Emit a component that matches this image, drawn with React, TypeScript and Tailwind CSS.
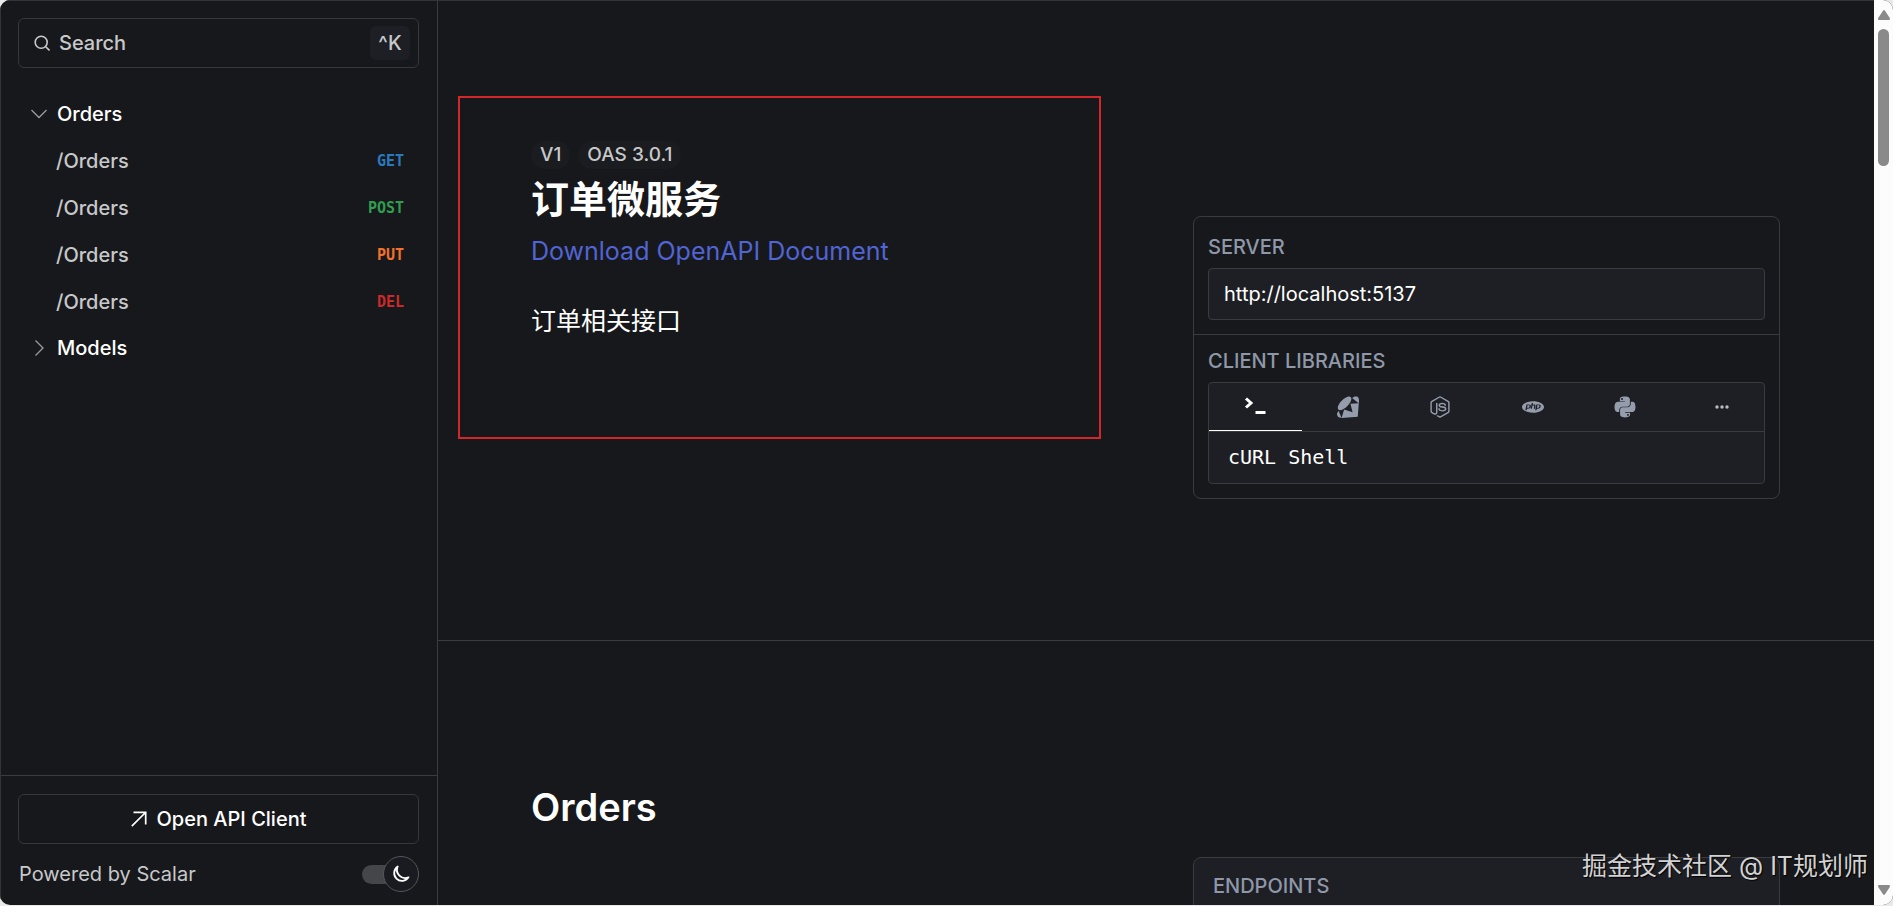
import React from 'react';
import { FaNodeJs, FaPython } from 'react-icons/fa';
import { SiPhp, SiRuby } from 'react-icons/si';

interface Operation {
    id: string;
    path: string;
    method: string;
    color: string;
}

const operations: Operation[] = [
    { id: 'get', path: '/Orders', method: 'GET', color: 'text-[#2b7abf]' },
    { id: 'post', path: '/Orders', method: 'POST', color: 'text-[#2f9e4f]' },
    { id: 'put', path: '/Orders', method: 'PUT', color: 'text-[#f0722b]' },
    { id: 'delete', path: '/Orders', method: 'DEL', color: 'text-[#c92a2a]' },
];

const TerminalIcon = () => (
    <svg viewBox="0 0 22 22" className="h-[22px] w-[22px]" fill="none" stroke="currentColor" strokeWidth="3">
        <path d="M2 2.500l5 4.500-5 4.500" />
        <path d="M11.500 16.500h10" />
    </svg>
);

const DotsIcon = () => (
    <svg viewBox="0 0 14 4" className="h-1 w-[14px]" fill="currentColor">
        <circle cx="2" cy="2" r="1.700" />
        <circle cx="7" cy="2" r="1.700" />
        <circle cx="12" cy="2" r="1.700" />
    </svg>
);

const Chevron = ({ open }: { open?: boolean }) => (
    <svg viewBox="0 0 16 16" className="h-4 w-4 text-[#9a9b9f]" fill="none" stroke="currentColor" strokeWidth="1.300">
        {open ? <path d="M.5 4L8 11.500 15.500 4" /> : <path d="M4.500.5L12 8l-7.500 7.500" />}
    </svg>
);

const clients = [
    { name: 'Shell', icon: <TerminalIcon /> },
    { name: 'Ruby', icon: <SiRuby className="h-[22px] w-[22px]" /> },
    { name: 'Node.js', icon: <FaNodeJs className="h-[22px] w-[22px]" /> },
    { name: 'PHP', icon: <SiPhp className="h-[22px] w-[22px]" /> },
    { name: 'Python', icon: <FaPython className="h-6 w-6" /> },
];

const Sidebar: React.FC = () => (
    <aside className="flex w-[437px] shrink-0 flex-col border-r border-[#3a3b3e] text-xl font-medium">
        <div className="pb-4 pl-[17px] pr-[18px] pt-[17px]">
            <button className="flex h-[50px] w-full items-center rounded-md border border-[#36373a] pl-[15px] pr-2 text-[#c7c8ca]">
                <svg viewBox="0 0 16 16" className="h-4 w-4" fill="none" stroke="currentColor" strokeWidth="1.600">
                    <circle cx="7.200" cy="7.200" r="6" />
                    <path d="M11.500 11.500L15.500 15.500" />
                </svg>
                <span className="ml-[9px]">Search</span>
                <kbd className="ml-auto flex h-[34px] w-10 items-center justify-center rounded-md bg-[#1e1f24] font-[Inter,sans-serif]">^K</kbd>
            </button>
        </div>

        <nav className="flex-1 px-[30px] pt-1.5">
            <button className="flex h-[47px] w-full items-center gap-[10px] text-white">
                <Chevron open />
                Orders
            </button>
            {operations.map((op) => (
                <a key={op.id} href={'#' + op.id} className="flex h-[47px] items-center justify-between pl-[25px] pr-[3px] text-[#c7c8ca]">
                    {op.path}
                    <span className={'font-["DejaVu_Sans_Mono",monospace] text-[15px] font-bold leading-5 ' + op.color}>{op.method}</span>
                </a>
            ))}
            <button className="flex h-[45px] w-full items-center gap-[10px] text-white">
                <Chevron />
                Models
            </button>
        </nav>

        <div className="border-t border-[#3a3b3e] pb-[17px] pl-[17px] pr-[18px] pt-[18px]">
            <button className="flex h-[50px] w-full items-center justify-center gap-[10px] rounded-md border border-[#36373a] text-white">
                <svg viewBox="0 0 16 16" className="h-4 w-4" fill="none" stroke="currentColor" strokeWidth="1.700">
                    <path d="M2.500 1.300h12.200v12.200M14.500 1.500L.8 15.200" />
                </svg>
                Open API Client
            </button>
            <div className="mt-4 flex h-7 items-center justify-between font-normal text-[#c7c8ca]">
                <a href="#scalar" className="pl-px">Powered by Scalar</a>
                <button aria-label="Toggle dark mode" className="flex h-[19px] w-[57px] items-center justify-end rounded-full bg-[#454649]">
                    <span className="flex h-9 w-9 shrink-0 items-center justify-center rounded-full border border-[#55565a] bg-[#191b21] text-white">
                        <svg viewBox="0 0 18 18" className="h-[18px] w-[18px]" fill="none" stroke="currentColor" strokeWidth="1.800" strokeLinejoin="round">
                            <path d="M5.700 1.500A7.800 7.800 0 1 0 16.500 12.300A8.200 8.200 0 0 1 5.700 1.500z" />
                        </svg>
                    </span>
                </button>
            </div>
        </div>
    </aside>
);

const Introduction: React.FC = () => (
    <section className="relative flex h-[640px] shrink-0 border-b border-[#3a3b3e] pl-[93px] pr-[94px]">
        {/* Highlight frame */}
        <div className="pointer-events-none absolute left-5 top-[95px] h-[343px] w-[643px] border-2 border-[#d3272c]" />

        <div className="flex-1 pt-[140px]">
            <div className="flex gap-2 text-[19px] font-medium leading-7 text-[#c7c8ca]">
                <span className="rounded-full bg-[#1b1c20] px-[9px]">V1</span>
                <span className="rounded-full bg-[#1b1c20] px-[9px]">OAS 3.0.1</span>
            </div>
            <h1 className="mt-1.5 text-[38px] font-bold leading-[48px] text-white">订单微服务</h1>
            <a href="#openapi" className="mt-2 block text-[25px] leading-10 text-[#5164d4]">Download OpenAPI Document</a>
            <p className="mt-8 text-[25px] leading-9 text-white">订单相关接口</p>
        </div>

        <div className="w-[587px] self-start pt-[215px]">
            <div className="rounded-lg border border-[#3a3b3e]">
                <div className="border-b border-[#3a3b3e] p-[14px]">
                    <label htmlFor="server" className="block text-xl font-medium leading-8 text-[#8f98a9]">SERVER</label>
                    <input
                        id="server"
                        readOnly
                        value="http://localhost:5137"
                        className="mt-[5px] block h-[52px] w-full rounded-[4px] border border-[#3a3b3e] bg-[#1e1f24] px-[15px] text-xl text-white outline-none"
                    />
                </div>
                <div className="p-[14px] pt-[10px]">
                    <h2 className="text-xl font-medium leading-8 text-[#8f98a9]">CLIENT LIBRARIES</h2>
                    <div className="mt-[5px] rounded-[4px] border border-[#3a3b3e] bg-[#1e1f24]">
                        <div role="tablist" className="grid grid-cols-6 border-b border-[#3a3b3e]">
                            {clients.map((client, i) => (
                                <button
                                    key={client.name}
                                    role="tab"
                                    aria-label={client.name}
                                    aria-selected={i === 0}
                                    className={
                                        i === 0
                                            ? 'flex h-12 items-center justify-center border-b border-white text-white'
                                            : 'flex h-12 items-center justify-center text-[#959dad]'
                                    }
                                >
                                    {client.icon}
                                </button>
                            ))}
                            <button aria-label="More" className="flex h-12 items-center justify-center pl-2 text-[#b9bbc0]">
                                <DotsIcon />
                            </button>
                        </div>
                        <div className='px-[19px] font-["DejaVu_Sans_Mono",monospace] text-xl leading-[51px] text-white'>cURL Shell</div>
                    </div>
                </div>
            </div>
        </div>
    </section>
);

const OrdersSection: React.FC = () => (
    <section className="flex min-h-0 flex-1 pl-[93px] pr-[94px]">
        <h2 className="flex-1 pt-[142px] text-[38px] font-semibold leading-[48px] text-white">Orders</h2>
        <div className="w-[587px] pt-[216px]">
            <div className="h-[200px] rounded-lg border border-[#3a3b3e] bg-[#1e1f24] px-[19px] pt-3 text-xl font-medium leading-8 text-[#8f98a9]">
                ENDPOINTS
            </div>
        </div>
    </section>
);

const Scrollbar: React.FC = () => (
    <div className="flex w-[19px] shrink-0 flex-col items-center bg-[#fcfcfc] text-[#8a8a8a]">
        <svg viewBox="0 0 12 10" className="mt-[10px] h-[10px] w-3" fill="currentColor">
            <path d="M6 0q.6 0 1 .7L11.800 8q.6 2-.8 2H1q-1.400 0-.8-2L5 .7Q5.400 0 6 0z" />
        </svg>
        <div className="mt-[9px] h-[137px] w-[11px] rounded-full bg-[#8a8a8a]" />
        <svg viewBox="0 0 12 10" className="mb-[10px] mt-auto h-[10px] w-3" fill="currentColor">
            <path d="M6 10q.6 0 1-.7L11.800 2q.6-2-.8-2H1q-1.400 0-.8 2L5 9.300q.4.7 1 .7z" />
        </svg>
    </div>
);

const App: React.FC = () => (
    <div className="relative h-screen bg-[#e9e9ea] pb-px font-[Inter,'Noto_Sans_CJK_SC',sans-serif]">
        <div className="flex h-full overflow-hidden rounded-[10px] bg-[#17181b]">
            <div className="flex min-w-0 flex-1 border-l border-t border-[#333437]">
                <Sidebar />
                <main className="flex min-w-0 flex-1 flex-col overflow-hidden">
                    <Introduction />
                    <OrdersSection />
                </main>
            </div>
            <Scrollbar />
        </div>
        <div className="absolute bottom-[22px] right-[25px] text-[25px] leading-9 text-[#d2d2d3] [text-shadow:1px_1px_1px_#000]">掘金技术社区 @ IT规划师</div>
    </div>
);

export default App;
